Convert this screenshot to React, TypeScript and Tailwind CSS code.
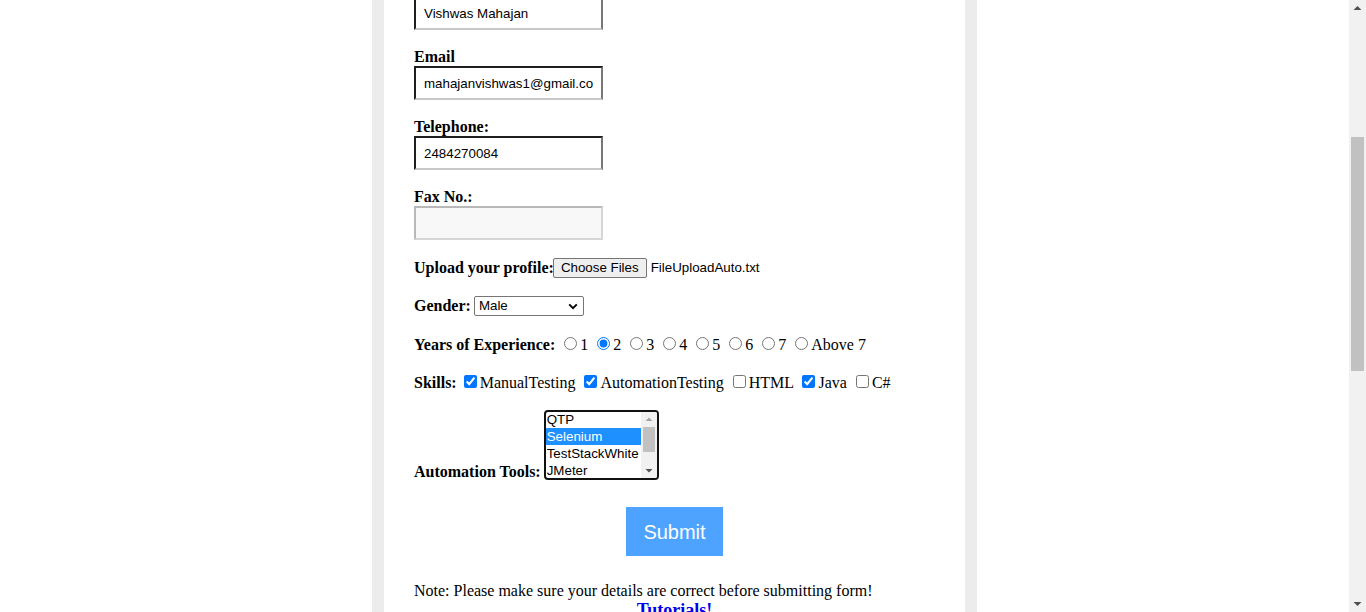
const serif = "font-['Liberation_Serif','Times_New_Roman',serif]"
const sans = "font-['Liberation_Sans',Arial,sans-serif]"

function TextBox({ value, disabled }: { value?: string; disabled?: boolean }) {
  const border = disabled
    ? 'border-t-[#b8b8b8] border-l-[#b8b8b8] border-r-[#d6d6d6] border-b-[#d6d6d6] bg-[#f8f8f8]'
    : 'border-t-[#1e1e1e] border-l-[#1e1e1e] border-r-[#777] border-b-[#c8c8c8] bg-white'
  return (
    <div className={`w-[189px] h-[34px] border-2 ${border} pl-2 pt-[2px] flex items-center text-[13.33px] text-black ${sans}`}>
      {value}
    </div>
  )
}

function Label({ children }: { children: React.ReactNode }) {
  return <div className="h-[18px] leading-[18px] font-bold text-[16px]">{children}</div>
}

const years = ['1', '2', '3', '4', '5', '6', '7', 'Above 7']
const skills = [
  { name: 'ManualTesting', on: true },
  { name: 'AutomationTesting', on: true },
  { name: 'HTML', on: false },
  { name: 'Java', on: true },
  { name: 'C#', on: false },
]
const tools = ['QTP', 'Selenium', 'TestStackWhite', 'JMeter']

function Listbox() {
  return (
    <div className="w-[115px] h-[70px] border-2 border-[#111] rounded-[4px] bg-white flex overflow-hidden">
      <div className={`flex-1 -mt-[1px] text-[13.33px] ${sans}`}>
        {tools.map((t) => (
          <div
            key={t}
            className={`h-[17px] leading-[17px] pl-[1px] whitespace-nowrap ${t === 'Selenium' ? 'bg-[#1e90ff] text-white' : 'text-black'}`}
          >
            {t}
          </div>
        ))}
      </div>
      <div className="w-[16px] bg-[#f1f1f1] flex flex-col items-center">
        <svg width="16" height="15" viewBox="0 0 16 15">
          <path d="M4.5 9 L8 5.5 L11.5 9 Z" fill="#a3a3a3" />
        </svg>
        <div className="w-[12px] h-[25px] bg-[#c1c1c1]" />
        <div className="flex-1" />
        <svg width="16" height="13" viewBox="0 0 16 13">
          <path d="M4.5 4 L8 7.5 L11.5 4 Z" fill="#505050" />
        </svg>
      </div>
    </div>
  )
}

export default function App() {
  return (
    <div className={`w-screen h-[612px] overflow-hidden flex bg-white text-black ${serif}`}>
      <div className="flex-1 overflow-hidden">
        <div className="mx-auto w-[605px] h-[612px] border-x-[12px] border-[#ececec] bg-white pl-[30px] flex flex-col">
          <div className="-mt-[4px]">
            <TextBox value="Vishwas Mahajan" />
          </div>

          <div className="mt-[18px]">
            <Label>Email</Label>
            <TextBox value="mahajanvishwas1@gmail.co" />
          </div>

          <div className="mt-[18px]">
            <Label>Telephone:</Label>
            <TextBox value="2484270084" />
          </div>

          <div className="mt-[18px]">
            <Label>Fax No.:</Label>
            <TextBox disabled />
          </div>

          <div className="mt-[18px] h-5 flex items-center">
            <span className="font-bold text-[16px]">Upload your profile:</span>
            <span
              className={`-ml-[1px] h-5 px-[7px] flex items-center border border-[#767676] rounded-[2px] bg-[#efefef] text-[13.33px] ${sans}`}
            >
              Choose Files
            </span>
            <span className={`ml-1 text-[13.33px] ${sans}`}>FileUploadAuto.txt</span>
          </div>

          <div className="mt-[18px] h-5 flex items-center">
            <span className="font-bold text-[16px]">Gender:</span>
            <div
              className={`ml-[3px] w-[110px] h-5 border border-[#767676] rounded-[2px] bg-white flex items-center justify-between pl-[4px] pr-[5px] text-[13.33px] ${sans}`}
            >
              <span>Male</span>
              <svg width="10" height="7" viewBox="0 0 10 7">
                <path d="M1.2 1.3 L5 5.1 L8.8 1.3" fill="none" stroke="#000" strokeWidth="1.9" />
              </svg>
            </div>
          </div>

          <div className="mt-[18px] h-5 leading-5 text-[16px] whitespace-nowrap">
            <span className="font-bold">Years of Experience:</span>{' '}
            {years.map((y) => (
              <span key={y}>
                <input
                  type="radio"
                  name="exp"
                  defaultChecked={y === '2'}
                  className="m-[3px_3px_0_5px] w-[13px] h-[13px]"
                />
                {y}{' '}
              </span>
            ))}
          </div>

          <div className="mt-[18px] h-5 leading-5 text-[16px] whitespace-nowrap">
            <span className="font-bold">Skills:</span>{' '}
            {skills.map((s, i) => (
              <span key={s.name}>
                <input
                  type="checkbox"
                  defaultChecked={s.on}
                  className={i === 0 ? 'm-[3px_3px_0_3px] w-[13px] h-[13px]' : 'm-[3px_3px_0_5px] w-[13px] h-[13px]'}
                />
                {s.name}{' '}
              </span>
            ))}
          </div>

          <div className="mt-[18px] flex items-end">
            <span className="font-bold text-[16px] leading-[18px] -mb-[1px]">Automation Tools:</span>
            <div className="ml-[3px]">
              <Listbox />
            </div>
          </div>

          <div className="mt-[27px] flex justify-center pr-[30px]">
            <button className={`w-[97px] h-[49px] bg-[#4da3ff] text-white text-[20px] ${sans}`}>Submit</button>
          </div>

          <div className="mt-[26px] text-[16px] leading-[18px]">
            Note: Please make sure your details are correct before submitting form!
          </div>
          <div className="flex justify-center pr-[30px]">
            <span className="text-[18px] leading-[21px] font-bold text-[#0000ee]">Tutorials!</span>
          </div>
        </div>
      </div>

      <div className="w-[17px] h-[612px] bg-[#f1f1f1] flex flex-col items-center">
        <svg width="17" height="17" viewBox="0 0 17 17">
          <path d="M4.5 10 L8.5 6 L12.5 10 Z" fill="#505050" />
        </svg>
        <div className="mt-[120px] w-[13px] h-[234px] bg-[#c1c1c1]" />
        <div className="flex-1" />
        <svg width="17" height="17" viewBox="0 0 17 17">
          <path d="M4.5 7 L8.5 11 L12.5 7 Z" fill="#505050" />
        </svg>
      </div>
    </div>
  )
}
